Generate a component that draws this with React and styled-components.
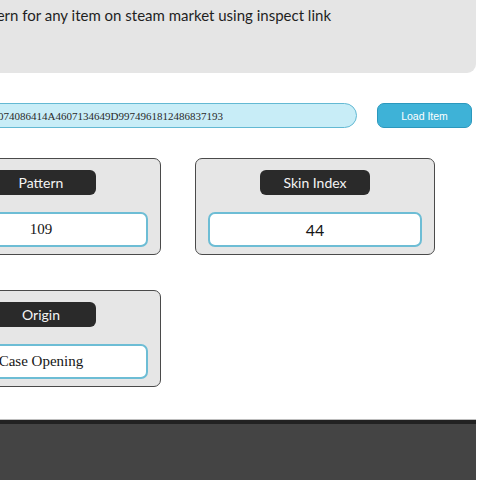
import React from "react";
import styled, { createGlobalStyle } from "styled-components";

const GlobalStyle = createGlobalStyle`
  html, body {
    margin: 0;
    padding: 0;
    background: #ffffff;
    overflow: hidden;
  }
  body {
    font-family: Lato, "Open Sans", sans-serif;
  }
`;

const Page = styled.div`
  display: flex;
  flex-direction: column;
  width: 576px;
  margin-left: -100px;
  min-height: 480px;
`;

const Header = styled.header`
  height: 73px;
  box-sizing: border-box;
  padding: 5px 0 0 38px;
  background: #e5e5e5;
  border-radius: 0 0 9px 0;
  color: #1f1f1f;
  font-size: 15px;
  line-height: 20px;
`;

const SearchRow = styled.div`
  display: flex;
  align-items: center;
  gap: 20px;
  margin-top: 30px;
  padding-left: 21px;
`;

const LinkInput = styled.input`
  width: 436px;
  height: 25px;
  box-sizing: border-box;
  padding: 0 10px 0 0;
  border: 1px solid #63b9d3;
  border-radius: 13px;
  background: #c8edf7;
  color: #2a2a2a;
  font-family: "Liberation Serif", serif;
  font-size: 11px;
  text-align: right;
  padding-right: 133px;
  outline: none;
`;

const LoadButton = styled.button`
  width: 95px;
  height: 25px;
  border: 1px solid #2b98bd;
  border-radius: 7px;
  background: #3eb2d7;
  color: #ffffff;
  font-family: "Liberation Sans", Arial, sans-serif;
  font-size: 10.5px;
  cursor: pointer;
`;

const Grid = styled.div`
  display: grid;
  grid-template-columns: 240px 240px;
  column-gap: 34px;
  row-gap: 35px;
  margin-top: 30px;
  padding-left: 21px;
`;

const Card = styled.section`
  height: 97px;
  box-sizing: border-box;
  display: flex;
  flex-direction: column;
  align-items: center;
  padding-top: 11px;
  background: #e6e6e6;
  border: 1px solid #4a4a4a;
  border-radius: 7px;
`;

const Label = styled.div`
  width: 110px;
  height: 25px;
  display: flex;
  align-items: center;
  justify-content: center;
  background: #2a2a2a;
  border-radius: 6px;
  color: #f4f4f4;
  font-size: 14px;
`;

const Value = styled.div`
  width: 214px;
  height: 35px;
  box-sizing: border-box;
  margin-top: 17px;
  display: flex;
  align-items: center;
  justify-content: center;
  background: #ffffff;
  border: 2px solid #6dbdd5;
  border-radius: 7px;
  color: #151515;
  font-family: ${(p) => (p.$serif ? '"Liberation Serif", serif' : 'Lato, sans-serif')};
  font-size: ${(p) => (p.$serif ? "15px" : "16px")};
`;

const Footer = styled.footer`
  margin-top: 32px;
  flex: 1;
  min-height: 70px;
  background: #444444;
  border-top: 1px solid #bdbdbd;
  box-shadow: inset 0 4px 0 #222222;
`;

const fields = [
  { label: "Pattern", value: "109", serif: true },
  { label: "Skin Index", value: "44", serif: false },
  { label: "Origin", value: "Case Opening", serif: true },
];

export default function App() {
  return (
    <>
      <GlobalStyle />
      <Page>
        <Header>Find pattern for any item on steam market using inspect link</Header>
        <SearchRow>
          <LinkInput
            readOnly
            value="S76561198074086414A4607134649D9974961812486837193"
          />
          <LoadButton>Load Item</LoadButton>
        </SearchRow>
        <Grid>
          {fields.map((f) => (
            <Card key={f.label}>
              <Label>{f.label}</Label>
              <Value $serif={f.serif}>{f.value}</Value>
            </Card>
          ))}
        </Grid>
        <Footer />
      </Page>
    </>
  );
}
